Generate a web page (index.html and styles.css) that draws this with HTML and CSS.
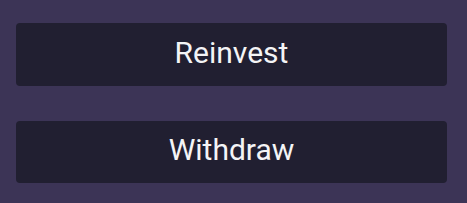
FILE: index.html
```html
<!DOCTYPE html>
<html>
<head>
<meta charset="utf-8">
<link rel="stylesheet" href="styles.css">
</head>
<body>
<div class="actions">
  <button class="action-btn">Reinvest</button>
  <button class="action-btn">Withdraw</button>
</div>
</body>
</html>
```
FILE: styles.css
```css
html, body {
  margin: 0;
  padding: 0;
  background: #3c3456;
  height: 100%;
}
.actions {
  display: flex;
  flex-direction: column;
  gap: 35px;
  padding: 23px 20px 0 16px;
}
.action-btn {
  height: 63px;
  border: none;
  border-radius: 4px;
  background: #211f31;
  color: #f4f4f6;
  font-family: Roboto, "Open Sans", sans-serif;
  font-size: 30px;
  font-weight: 400;
  letter-spacing: 0;
  padding: 0 0 5px 0;
  margin: 0;
  cursor: pointer;
}
.action-btn + .action-btn {
  height: 62px;
}
```
